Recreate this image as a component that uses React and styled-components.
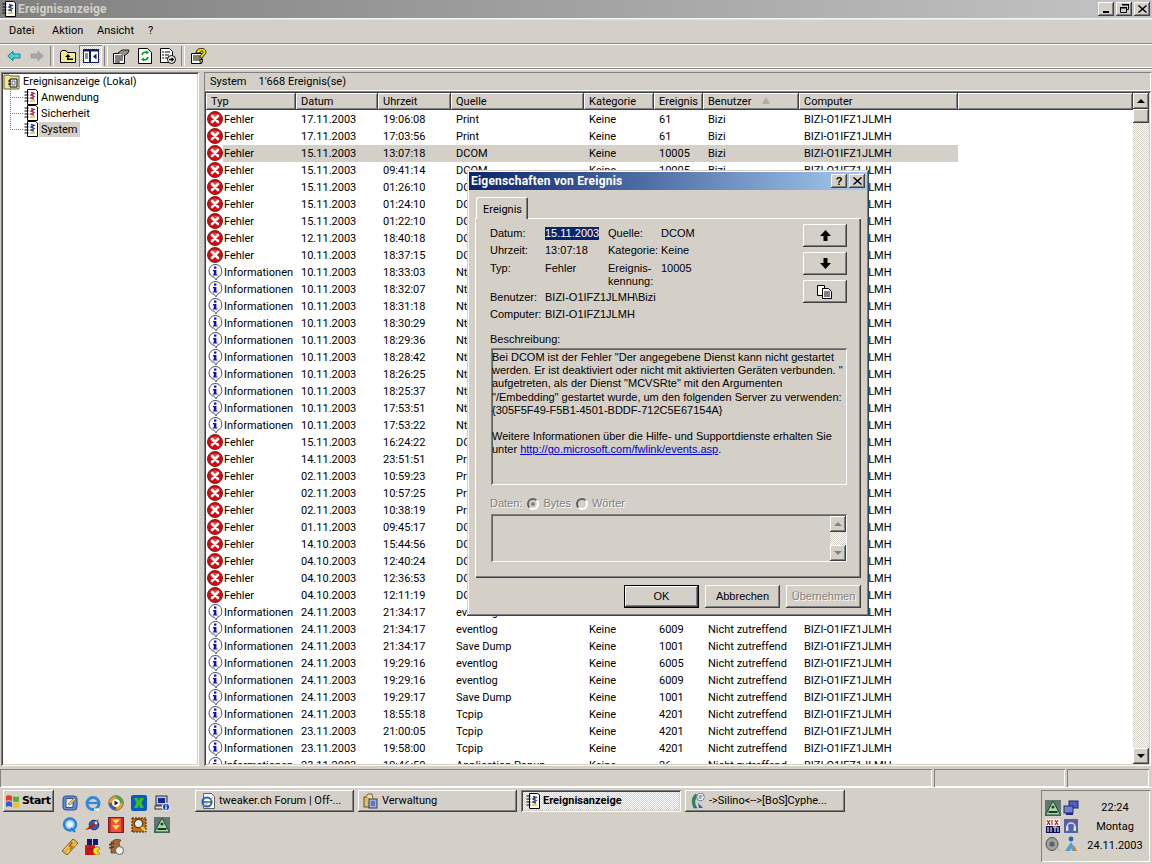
import React from 'react';
import styled, { createGlobalStyle, css } from 'styled-components';

const GREY = '#d4d0c8';

const raised = css`
  box-shadow: inset -1px -1px #404040, inset 1px 1px #fff, inset -2px -2px #808080, inset 2px 2px ${GREY};
`;
const sunken = css`
  box-shadow: inset 1px 1px #808080, inset -1px -1px #fff, inset 2px 2px #404040, inset -2px -2px ${GREY};
`;
const dither = css`
  background: repeating-conic-gradient(#fff 0 25%, ${GREY} 0 50%) 0 0 / 2px 2px;
`;

const GlobalStyle = createGlobalStyle`
  html, body { margin: 0; padding: 0; background: ${GREY}; }
  * { box-sizing: border-box; }
`;

const Desktop = styled.div`
  position: relative;
  width: 1152px;
  height: 864px;
  overflow: hidden;
  display: flex;
  flex-direction: column;
  background: ${GREY};
  color: #000;
  font: 11px/13px Roboto, "Liberation Sans", sans-serif;
`;

const TitleBar = styled.div`
  height: 19px;
  flex: none;
  display: flex;
  align-items: center;
  padding: 0 2px 1px 2px;
  gap: 2px;
  background: linear-gradient(90deg, #808080, #c4c4c4);
  border-bottom: 1px solid #f4f2ee;
`;
const TitleText = styled.div`
  flex: 1;
  font: bold 12px/14px Roboto, "Liberation Sans", sans-serif;
  letter-spacing: 0.2px;
  color: ${(p) => (p.$active ? '#fff' : GREY)};
`;
const CaptionButton = styled.div`
  width: 16px;
  height: 14px;
  background: ${GREY};
  ${raised}
  display: flex;
  align-items: center;
  justify-content: center;
`;
const MenuBar = styled.div`
  height: 25px;
  flex: none;
  display: flex;
  align-items: center;
  padding: 0 0 2px 9px;
  border-bottom: 1px solid #908c84;
  box-shadow: inset 0 1px #e8e6e0;
`;
const MenuItem = styled.span`
  width: ${(p) => p.$width}px;
`;
const Toolbar = styled.div`
  height: 24px;
  flex: none;
  display: flex;
  align-items: center;
  padding-left: 2px;
  box-shadow: inset 0 1px #fff;
  border-bottom: 1px solid #fff;
`;
const ToolButton = styled.div`
  width: 23px;
  height: 22px;
  display: flex;
  align-items: center;
  justify-content: center;
  ${(p) => p.$pressed && css`
    ${dither}
    box-shadow: inset 1px 1px #808080, inset -1px -1px #fff;
  `}
`;
const ToolSep = styled.div`
  width: 8px;
  height: 20px;
  display: flex;
  justify-content: center;
  &::after {
    content: '';
    width: 2px;
    border-left: 1px solid #808080;
    border-right: 1px solid #fff;
  }
`;
const Main = styled.div`
  flex: 1;
  min-height: 0;
  display: flex;
  padding: 3px 1px 3px 1px;
  border-top: 1px solid #808080;
  box-shadow: inset 0 1px #fff;
`;
const TreePane = styled.div`
  width: 198px;
  flex: none;
  background: #fff;
  padding: 1px 0 0 2px;
  ${sunken}
`;
const TreeRow = styled.div`
  height: 16px;
  display: flex;
  align-items: center;
  gap: ${(p) => (p.$root ? 2 : 1)}px;
`;
const TreeConnector = styled.span`
  width: 13px;
  height: 16px;
  margin-left: 7px;
  flex: none;
  background:
    repeating-linear-gradient(#808080 0 1px, transparent 1px 2px) 0 0 / 1px ${(p) => (p.$last ? '8px' : '16px')} no-repeat,
    repeating-linear-gradient(90deg, #808080 0 1px, transparent 1px 2px) 0 8px / 13px 1px no-repeat;
`;
const TreeLabel = styled.span`
  padding: 1px 2px;
  background: ${(p) => (p.$selected ? GREY : 'transparent')};
`;
const ContentPane = styled.div`
  flex: 1;
  min-width: 0;
  margin-left: 5px;
  display: flex;
  flex-direction: column;
`;
const InfoBand = styled.div`
  height: 19px;
  flex: none;
  display: flex;
  align-items: center;
  padding-left: 6px;
  gap: 12px;
  box-shadow: inset 1px 1px #808080, inset -1px -1px #fff;
`;
const ListFrame = styled.div`
  flex: 1;
  min-height: 0;
  display: flex;
  background: #fff;
  padding: 2px;
  ${sunken}
`;
const ListBody = styled.div`
  flex: 1;
  min-width: 0;
  overflow: hidden;
`;
const COLUMNS = '90px 82px 73px 133px 70px 49px 96px 159px';
const HeaderRow = styled.div`
  display: flex;
  height: 17px;
  margin-bottom: 1px;
`;
const HeaderCells = styled.div`
  display: grid;
  grid-template-columns: ${COLUMNS};
`;
const HeaderCell = styled.div`
  background: ${GREY};
  ${raised}
  padding: 2px 0 0 5px;
  white-space: nowrap;
  position: relative;
`;
const HeaderFiller = styled(HeaderCell)`
  flex: 1;
`;
const SortMark = styled.span`
  position: absolute;
  left: 59px;
  top: 4px;
  width: 0;
  height: 0;
  border-left: 4px solid transparent;
  border-right: 4px solid transparent;
  border-bottom: 7px solid #b0aca4;
`;
const Row = styled.div`
  display: grid;
  grid-template-columns: ${COLUMNS};
  width: 752px;
  height: 17px;
  align-items: center;
  white-space: nowrap;
`;
const TypeCell = styled.div`
  display: flex;
  align-items: flex-start;
  height: 17px;
  padding-left: 1px;
`;
const TypeLabel = styled.span`
  flex: 1;
  padding-left: 1px;
  line-height: 17px;
  background: ${(p) => (p.$selected ? GREY : 'transparent')};
`;
const Cell = styled.div`
  padding-left: 5px;
  height: 17px;
  line-height: 17px;
  overflow: hidden;
  background: ${(p) => (p.$selected ? GREY : 'transparent')};
`;
const ScrollBar = styled.div`
  width: 16px;
  flex: none;
  display: flex;
  flex-direction: column;
  ${dither}
`;
const ScrollButton = styled.div`
  height: ${(p) => p.$h || 16}px;
  flex: none;
  background: ${GREY};
  ${raised}
  display: flex;
  align-items: center;
  justify-content: center;
`;
const ScrollTrack = styled.div`
  flex: 1;
`;
const Arrow = styled.span`
  width: 0;
  height: 0;
  border-left: 4px solid transparent;
  border-right: 4px solid transparent;
  ${(p) => (p.$down ? 'border-top' : 'border-bottom')}: 4px solid ${(p) => (p.$disabled ? '#808080' : '#000')};
`;
const StatusBar = styled.div`
  height: 18px;
  flex: none;
  display: flex;
  gap: 2px;
  padding: 0 3px 0 0;
`;
const StatusPanel = styled.div`
  width: ${(p) => (p.$width ? `${p.$width}px` : 'auto')};
  flex: ${(p) => (p.$width ? 'none' : 1)};
  box-shadow: inset 1px 1px #808080, inset -1px -1px #fff;
`;
const Taskbar = styled.div`
  height: 77px;
  flex: none;
  display: flex;
  align-items: flex-start;
  padding: 2px 2px 2px 3px;
  border-top: 1px solid #fff;
`;
const StartButton = styled.div`
  width: 51px;
  height: 22px;
  flex: none;
  ${raised}
  display: flex;
  align-items: center;
  gap: 1px;
  padding: 0 0 1px 2px;
  font: bold 11px/14px "DejaVu Sans", sans-serif;
  letter-spacing: -0.6px;
`;
const QuickLaunch = styled.div`
  width: 141px;
  flex: none;
  padding: 2px 0 0 4px;
  display: grid;
  grid-template-columns: repeat(5, 23px);
  grid-auto-rows: 22px;
  justify-items: center;
  align-items: center;
`;
const TaskButtons = styled.div`
  display: flex;
  gap: 4px;
  flex: 1;
`;
const TaskButton = styled.div`
  width: ${(p) => p.$width}px;
  height: 22px;
  flex: none;
  display: flex;
  align-items: center;
  gap: 3px;
  padding: 0 0 1px 5px;
  white-space: nowrap;
  ${raised}
  ${(p) => p.$active && css`
    ${dither}
    ${sunken}
    font-weight: bold;
  `}
`;
const Tray = styled.div`
  width: 109px;
  height: 72px;
  flex: none;
  display: flex;
  box-shadow: inset 1px 1px #808080, inset -1px -1px #fff;
  padding: 9px 0 0 3px;
`;
const TrayIcons = styled.div`
  display: grid;
  grid-template-columns: 18px 18px;
  grid-auto-rows: 18px;
  justify-items: center;
  align-items: center;
`;
const Clock = styled.div`
  flex: 1;
  display: flex;
  flex-direction: column;
  align-items: center;
  gap: 6px;
  padding-top: 2px;
`;

/* dialog */
const Dialog = styled.div`
  position: absolute;
  left: 467px;
  top: 170px;
  width: 402px;
  height: 446px;
  background: ${GREY};
  padding: 2px;
  box-shadow: inset -1px -1px #404040, inset 1px 1px ${GREY}, inset -2px -2px #808080, inset 2px 2px #fff;
  font: 11px/13px "Liberation Sans", sans-serif;
`;
const DialogTitle = styled.div`
  height: 18px;
  display: flex;
  align-items: center;
  padding: 0 2px;
  gap: 2px;
  background: linear-gradient(90deg, #0a246a, #a6caf0);
`;
const DialogBody = styled.div`
  padding: 7px 6px 0 6px;
`;
const Tab = styled.div`
  width: 52px;
  height: 22px;
  margin: 0 0 -1px 1px;
  padding: 6px 0 0 7px;
  background: ${GREY};
  position: relative;
  z-index: 1;
  font: 11px/13px Roboto, "Liberation Sans", sans-serif;
  border-radius: 2px 2px 0 0;
  box-shadow: inset 1px 1px #fff, inset -1px 0 #404040, inset -2px 0 #808080;
`;
const TabPanel = styled.div`
  height: 360px;
  padding: 6px 14px 0 15px;
  box-shadow: inset 1px 1px #fff, inset -1px -1px #404040, inset -2px -2px #808080;
`;
const TopArea = styled.div`
  display: flex;
  justify-content: space-between;
  height: 102px;
`;
const Fields = styled.div`
  margin-top: 3px;
  display: grid;
  grid-template-columns: 55px 63px 53px auto;
  grid-template-rows: 17px 18px 29px 17px 17px;
  align-items: start;
`;
const Wide = styled.div`
  grid-column: 2 / span 3;
`;
const Highlight = styled.span`
  display: inline-block;
  background: #0a246a;
  color: #fff;
`;
const ArrowButtons = styled.div`
  display: flex;
  flex-direction: column;
  gap: 5px;
`;
const ArrowButton = styled.div`
  width: 44px;
  height: 23px;
  background: ${GREY};
  ${raised}
  display: flex;
  align-items: center;
  justify-content: center;
`;
const SectionLabel = styled.div`
  margin-top: 7px;
`;
const DescriptionBox = styled.div`
  margin: 2px 0 0 1px;
  width: 356px;
  height: 137px;
  padding: 3px 0 0 1px;
  line-height: 13.2px;
  white-space: pre;
  box-shadow: inset 1px 1px #808080, inset -1px -1px #fff, inset 2px 2px #606060;
`;
const LinkText = styled.span`
  color: #0000c8;
  text-decoration: underline;
`;
const DataRow = styled.div`
  margin-top: 12px;
  height: 13px;
  display: flex;
  align-items: center;
  color: #808080;
  text-shadow: 1px 1px #fff;
`;
const Radio = styled.span`
  width: 12px;
  height: 12px;
  margin: 0 4px 0 5px;
  border-radius: 50%;
  flex: none;
  display: flex;
  align-items: center;
  justify-content: center;
  background: ${GREY};
  border: 2px solid;
  border-color: #606060 #fff #fff #606060;
  &::after {
    content: '';
    width: 4px;
    height: 4px;
    border-radius: 50%;
    background: ${(p) => (p.$checked ? '#808080' : 'transparent')};
  }
`;
const DataBox = styled.div`
  margin: 4px 0 0 1px;
  width: 356px;
  height: 48px;
  display: flex;
  justify-content: flex-end;
  padding: 2px 1px 1px 2px;
  box-shadow: inset 1px 1px #808080, inset -1px -1px #fff, inset 2px 2px #606060;
`;
const DialogFooter = styled.div`
  margin-top: 7px;
  display: flex;
  justify-content: flex-end;
  gap: 6px;
`;
const PushButton = styled.div`
  height: 23px;
  width: 75px;
  background: ${GREY};
  display: flex;
  align-items: center;
  justify-content: center;
  ${raised}
  ${(p) => p.$default && css`
    outline: 1px solid #000;
    outline-offset: -1px;
    box-shadow: inset -2px -2px #404040, inset 2px 2px #fff, inset -3px -3px #808080;
  `}
  ${(p) => p.$disabled && css`
    color: #808080;
    text-shadow: 1px 1px #fff;
  `}
`;

/* icons */
const Svg = ({ size = 16, w, h, children }) => (
  <svg width={w || size} height={h || size} viewBox={`0 0 ${w || size} ${h || size}`} style={{ display: 'block', flex: 'none' }}>
    {children}
  </svg>
);

const ErrorIcon = () => (
  <Svg size={16}>
    <circle cx="8" cy="8" r="7.5" fill="#d20c12" stroke="#8a1a1a" />
    <path d="M3 6a5.5 5.5 0 0 1 10 0" fill="#f06a60" opacity=".6" />
    <path d="M5 5l6 6M11 5l-6 6" stroke="#fff" strokeWidth="2.6" strokeLinecap="round" />
  </Svg>
);
const InfoIcon = () => (
  <Svg size={16}>
    <path d="M8 .5a6.6 6.6 0 0 1 2.4 12.8L9 16l-1.5-2.6A6.5 6.5 0 0 1 8 .5z" fill="#fff" stroke="#505060" />
    <path d="M2 10a7 7 0 0 0 5.5 3.4L9 15.5" fill="none" stroke="#a0a0a8" />
    <rect x="7" y="2.5" width="2.4" height="2.2" fill="#1010c0" />
    <path d="M6 6h3.4v4.4h1v1.2H5.8v-1.2h1V7.2H6z" fill="#1010c0" />
  </Svg>
);
const LogIcon = ({ tone = '#a03060' }) => (
  <Svg w={14} h={16}>
    <path d="M3.5.5h8l2 1.5v13.5h-10z" fill="#fff" stroke="#000" />
    <path d="M.5 3h4M.5 6h4M.5 9h4M.5 12h4" stroke="#000" />
    <path d="M7 3.5l3 1-3 1.5 3 1.5-3 1.5 3 1" fill="none" stroke={tone} strokeWidth="1.4" />
    <path d="M6 12h5" stroke="#c8b000" strokeWidth="1.2" />
  </Svg>
);
const RootIcon = () => (
  <Svg size={18}>
    <path d="M1 3h5l1 1h9v13H1z" fill="#f0e890" stroke="#606040" />
    <path d="M9 7h5v8H7V7z" fill="#fff" stroke="#000" />
    <path d="M9 9h3v4H9z" fill="none" stroke="#6060a0" />
    <path d="M5 9h3M5 12h3" stroke="#000" />
  </Svg>
);
const BackIcon = () => (
  <Svg w={14} h={12}>
    <path d="M.8 6L6 1.2V4h7v4H6v2.8z" fill="#40d8e0" stroke="#106070" strokeWidth=".8" />
  </Svg>
);
const ForwardIcon = () => (
  <Svg w={14} h={12}>
    <path d="M13.2 6L8 1.2V4H1v4h7v2.8z" fill="#a8a8a8" stroke="#989898" strokeWidth=".8" />
  </Svg>
);
const UpFolderIcon = () => (
  <Svg w={16} h={14}>
    <path d="M.5 3.5l1.5-2h4l1.5 2h8v10H.5z" fill="#f4ec90" stroke="#000" />
    <path d="M8 5L5 8h2v3h6v-1.4H8.6V8h2z" fill="#000" />
  </Svg>
);
const PaneIcon = () => (
  <Svg w={16} h={14}>
    <rect x=".5" y=".5" width="15" height="13" fill="#fff" stroke="#102060" />
    <rect x=".5" y=".5" width="15" height="2" fill="#102060" />
    <rect x="6" y="1" width="2" height="13" fill="#102060" />
    <path d="M2 5h3M2 7h3M2 9h3" stroke="#102060" />
    <path d="M13.5 4.5v6l-3.5-3z" fill="#102060" />
  </Svg>
);
const PropsIcon = () => (
  <Svg w={17} h={16}>
    <path d="M.5 5.5h11v10H.5z" fill="#fff" stroke="#000" />
    <path d="M2 8h8M2 10h8M2 12h8M2 14h5" stroke="#000" />
    <path d="M5 5l4-3h7l-1 3-4 3" fill="#909090" stroke="#202020" />
  </Svg>
);
const RefreshIcon = () => (
  <Svg w={14} h={16}>
    <path d="M.5.5h9l4 4v11H.5z" fill="#fff" stroke="#000" />
    <path d="M4 7a3.4 3.4 0 0 1 5-2.4M10 9a3.4 3.4 0 0 1-5 2.4" fill="none" stroke="#10a020" strokeWidth="1.8" />
    <path d="M8 2.5l3 2-3 2zM6 9.5l-3 2 3 2z" fill="#10a020" />
  </Svg>
);
const ExportIcon = () => (
  <Svg w={16} h={16}>
    <path d="M.5.5h9l3 3v11H.5z" fill="#fff" stroke="#000" />
    <path d="M2 4h2M5 4h5M2 7h2M5 7h4M2 10h2M5 10h3" stroke="#000" />
    <circle cx="11.5" cy="11.5" r="4" fill="#fff" stroke="#000" />
    <path d="M9 10.7h2.5V9l2.7 2.5L11.5 14v-1.7H9z" fill="#000" />
  </Svg>
);
const HelpIcon = () => (
  <Svg w={16} h={16}>
    <path d="M.5 5.5h10v10H.5z" fill="#fff" stroke="#000" />
    <path d="M2 8h7M2 10h7M2 12h7" stroke="#000" />
    <path d="M5 5c0-6 10-6 10-1 0 3-3 3-3.5 6h-2.5c0-4 3-4 3-6 0-1.5-3-1.5-3 1z" fill="#f0d800" stroke="#000" strokeWidth=".8" />
    <rect x="9" y="11.5" width="2.6" height="2.6" fill="#f0d800" stroke="#000" strokeWidth=".8" />
  </Svg>
);
const CopyIcon = () => (
  <Svg w={16} h={14}>
    <path d="M.5.5h7v3h-2v7h-5z" fill="#fff" stroke="#000" />
    <path d="M5.5 3.5h6l3 3v7h-9z" fill="#fff" stroke="#000" />
    <path d="M7 7h6M7 9h6M7 11h6" stroke="#000" />
  </Svg>
);
const CloseGlyph = () => (
  <Svg w={9} h={8}><path d="M1 0l3.5 3L8 0l1 1-3.5 3L9 7 8 8 4.5 5 1 8 0 7l3.5-3L0 1z" /></Svg>
);
const WinFlag = () => (
  <Svg size={16}>
    <path d="M1 3c2-1 3-1 6 0v5c-3-1-4-1-6 0z" fill="#e04020" />
    <path d="M8 3.3c2 1 4 1 6 0v5c-2 1-4 1-6 0z" fill="#50b030" />
    <path d="M1 9c2-1 3-1 6 0v5c-3-1-4-1-6 0z" fill="#3060d0" />
    <path d="M8 9.3c2 1 4 1 6 0v5c-2 1-4 1-6 0z" fill="#f0c020" />
  </Svg>
);
const IeDocIcon = () => (
  <Svg size={16}>
    <path d="M3.5.5h8l3 3v12h-11z" fill="#fff" stroke="#606060" />
    <circle cx="7" cy="9" r="4.6" fill="none" stroke="#2060c0" strokeWidth="2" />
    <path d="M2.5 9h9" stroke="#2060c0" strokeWidth="1.6" />
    <path d="M1 13c3 0 9-4 12-9" fill="none" stroke="#e0b020" />
  </Svg>
);
const ToolsIcon = () => (
  <Svg size={16}>
    <rect x="1" y="4" width="7" height="10" fill="#d8c070" stroke="#705010" />
    <rect x="6" y="6" width="8" height="9" fill="#a0b0e0" stroke="#303870" />
    <path d="M3 4l2-3h4l1 5" fill="#e8e0b0" stroke="#806020" />
    <path d="M9 8v5M11 8v5" stroke="#303870" />
  </Svg>
);
const ChatIcon = () => (
  <Svg size={16}>
    <path d="M6 1c-4 2-5 8-2 14h3c-3-4-3-8 0-11z" fill="#209050" stroke="#105030" strokeWidth=".5" />
    <path d="M8 10l5 5H9z" fill="#2060b0" />
    <circle cx="10.5" cy="4" r="3.8" fill="#fff" stroke="#6080a0" />
    <path d="M8.5 3h4M8.5 5h3" stroke="#305070" />
  </Svg>
);

const Q = {
  mail: (
    <Svg size={16}>
      <rect x="1" y="1" width="14" height="14" rx="3" fill="#5d8fd0" stroke="#2a4c90" />
      <path d="M4 3.5h7v9H4z" fill="#e8eef8" stroke="#305090" />
      <path d="M6 9l6-6 2 1-6 6z" fill="#f0c050" stroke="#805020" strokeWidth=".5" />
    </Svg>
  ),
  ie: (
    <Svg size={16}>
      <circle cx="8" cy="8.5" r="6" fill="none" stroke="#3088dc" strokeWidth="3" />
      <path d="M3 8h11" stroke="#3088dc" strokeWidth="2.2" />
      <path d="M9 14.5h5" stroke="#fff" strokeWidth="2" />
    </Svg>
  ),
  wmp: (
    <Svg size={16}>
      <circle cx="8" cy="8" r="7.3" fill="#e8a030" stroke="#807050" />
      <path d="M8 1a7 7 0 0 1 7 7h-3a4 4 0 0 0-4-4z" fill="#50a050" />
      <path d="M1 8a7 7 0 0 0 7 7v-3a4 4 0 0 1-4-4z" fill="#3060c0" />
      <circle cx="8" cy="8" r="3.8" fill="#fff" />
      <path d="M6.5 5.5v5l4-2.5z" fill="#202020" />
    </Svg>
  ),
  kazaa: (
    <Svg size={16}>
      <rect width="16" height="16" rx="2" fill="#0858c8" />
      <path d="M3 3h4l1 3 1-3h4l-2.5 5L13 13H9L8 10l-1 3H3l2.5-5z" fill="#38c020" />
    </Svg>
  ),
  monitor: (
    <Svg size={16}>
      <rect x="2" y="1" width="11" height="9" fill="#c8c8c8" stroke="#303030" />
      <rect x="4" y="3" width="7" height="5" fill="#1028a0" />
      <rect x="1" y="11" width="10" height="3" fill="#e0e0e0" stroke="#303030" />
      <circle cx="12" cy="12" r="3.8" fill="#1840d0" stroke="#fff" />
      <path d="M12 9.8v1M12 11.5v3" stroke="#fff" strokeWidth="1.4" />
    </Svg>
  ),
  quicktime: (
    <Svg size={16}>
      <circle cx="8" cy="7.5" r="6" fill="#a0d0f0" stroke="#2880d0" strokeWidth="2.4" />
      <circle cx="8" cy="7.5" r="2.8" fill="#e8f4ff" />
      <path d="M9 11l4 4" stroke="#2880d0" strokeWidth="2.4" />
    </Svg>
  ),
  comet: (
    <Svg size={16}>
      <circle cx="9" cy="8" r="4.8" fill="#2a62b8" stroke="#1a3070" />
      <path d="M0 13L14 2l-3 6-6 4z" fill="#b02020" />
      <circle cx="11" cy="6" r="1.4" fill="#e0e8ff" />
    </Svg>
  ),
  getright: (
    <Svg size={16}>
      <rect x=".5" y=".5" width="15" height="15" fill="#d02828" stroke="#702020" />
      <rect x="3" y="1" width="10" height="14" fill="#f05040" />
      <path d="M4 2.5h8L8 7zM4 8h8l-4 5z" fill="#f8e040" />
    </Svg>
  ),
  magnifier: (
    <Svg size={16}>
      <rect x="1" y="1" width="14" height="14" fill="#c87018" stroke="#302010" strokeDasharray="2 1" />
      <circle cx="7.5" cy="6.5" r="4.2" fill="#e0f0f8" stroke="#604010" strokeWidth="1.4" />
      <path d="M10.5 10l4 4" stroke="#f0d050" strokeWidth="2.4" />
    </Svg>
  ),
  pyramid: (
    <Svg size={16}>
      <rect width="16" height="16" fill="#607870" />
      <path d="M8 1l7.5 14H.5z" fill="#a8d8a8" stroke="#204830" />
      <path d="M3.5 11h9v2h-9z" fill="#203828" />
      <circle cx="8" cy="7" r="1.6" fill="#204830" />
    </Svg>
  ),
  winamp: (
    <Svg size={16}>
      <path d="M11 0l5 4-11 12-5-4z" fill="#e8b040" stroke="#806020" />
      <path d="M2 11l10-9M5 14l9-9" stroke="#fff0b0" />
      <path d="M9 3L6 8h3l-2 5 5-6H9l2-4z" fill="#b07010" />
    </Svg>
  ),
  pacman: (
    <Svg size={16}>
      <rect x="2" width="5" height="6" fill="#101870" />
      <rect x="8" width="5" height="6" fill="#101870" />
      <rect y="6" width="10" height="10" fill="#d81818" />
      <path d="M1 10h8M5 6v4M3 10v6M7 10v6" stroke="#801010" strokeWidth=".6" />
      <path d="M12 8a4 4 0 1 0 3 6.5L12 12l3-2.5A4 4 0 0 0 12 8z" fill="#f8e020" stroke="#403000" strokeWidth=".5" />
    </Svg>
  ),
  donkey: (
    <Svg size={16}>
      <path d="M3 3l5-3 5 1-2 3 1 4-1 6H3z" fill="#a06838" stroke="#402810" strokeWidth=".6" />
      <path d="M1 6l5-2M1 9l5-1" stroke="#603818" strokeWidth="1.4" />
      <circle cx="11.5" cy="11.5" r="4" fill="#f0f0e8" stroke="#606060" />
    </Svg>
  ),
};

const T = {
  pyramid: Q.pyramid,
  network: (
    <Svg size={16}>
      <rect x="6" y="1" width="9" height="7" fill="#5060c0" stroke="#202870" />
      <rect x="1" y="6" width="9" height="7" fill="#7080d8" stroke="#202870" />
      <path d="M3 14h7" stroke="#202870" strokeWidth="2" />
    </Svg>
  ),
  lite: (
    <Svg size={16}>
      <rect x="1" y="1" width="14" height="7" fill="#fff" />
      <path d="M2 2l3 5M5 2L2 7M7 2v5M10 2l3 5M13 2l-3 5" stroke="#d01010" strokeWidth="1.2" />
      <rect x="1" y="8" width="14" height="7" fill="#101050" />
      <path d="M3 9v5M6 9v5M8 9h4M10 9v5M13 9v5" stroke="#fff" />
    </Svg>
  ),
  phones: (
    <Svg size={16}>
      <rect x="1" y="1" width="14" height="14" fill="#5860a8" />
      <path d="M4 9a4 4 0 0 1 8 0" fill="none" stroke="#e0e0f0" strokeWidth="1.4" />
      <rect x="3" y="8.5" width="2.4" height="4.5" fill="#e0e0f0" />
      <rect x="10.6" y="8.5" width="2.4" height="4.5" fill="#e0e0f0" />
    </Svg>
  ),
  speaker: (
    <Svg size={16}>
      <ellipse cx="7" cy="8" rx="6" ry="6.5" fill="#a0a0a0" stroke="#505050" />
      <circle cx="7" cy="8" r="2.6" fill="#606060" />
      <path d="M12 12l3 3" stroke="#c0c0c0" strokeWidth="2" />
    </Svg>
  ),
  person: (
    <Svg size={16}>
      <circle cx="8" cy="3" r="2.4" fill="#2060c0" />
      <path d="M8 6l-6 9h5l1-3 1 3h5z" fill="#50a0d0" />
      <path d="M11 9l3 6h-3z" fill="#e08020" />
    </Svg>
  ),
};

/* data */
const PC = 'BIZI-O1IFZ1JLMH';
const NA = 'Nicht zutreffend';
const err = (date, time, source, id = '10005') => ['e', date, time, source, 'Keine', id, 'Bizi', PC];
const inf = (date, time, source, id = '4359', user = NA) => ['i', date, time, source, 'Keine', id, user, PC];
const sp = (time) => inf('10.11.2003', time, 'NtServicePack', '4359', 'Bizi');

const rows = [
  err('17.11.2003', '19:06:08', 'Print', '61'),
  err('17.11.2003', '17:03:56', 'Print', '61'),
  err('15.11.2003', '13:07:18', 'DCOM'),
  err('15.11.2003', '09:41:14', 'DCOM'),
  err('15.11.2003', '01:26:10', 'DCOM'),
  err('15.11.2003', '01:24:10', 'DCOM'),
  err('15.11.2003', '01:22:10', 'DCOM'),
  err('12.11.2003', '18:40:18', 'DCOM'),
  err('10.11.2003', '18:37:15', 'DCOM'),
  sp('18:33:03'),
  sp('18:32:07'),
  sp('18:31:18'),
  sp('18:30:29'),
  sp('18:29:36'),
  sp('18:28:42'),
  sp('18:26:25'),
  sp('18:25:37'),
  sp('17:53:51'),
  sp('17:53:22'),
  err('15.11.2003', '16:24:22', 'DCOM'),
  err('14.11.2003', '23:51:51', 'Print', '61'),
  err('02.11.2003', '10:59:23', 'Print', '61'),
  err('02.11.2003', '10:57:25', 'Print', '61'),
  err('02.11.2003', '10:38:19', 'Print', '61'),
  err('01.11.2003', '09:45:17', 'DCOM'),
  err('14.10.2003', '15:44:56', 'DCOM'),
  err('04.10.2003', '12:40:24', 'DCOM'),
  err('04.10.2003', '12:36:53', 'DCOM'),
  err('04.10.2003', '12:11:19', 'DCOM'),
  inf('24.11.2003', '21:34:17', 'eventlog', '6005'),
  inf('24.11.2003', '21:34:17', 'eventlog', '6009'),
  inf('24.11.2003', '21:34:17', 'Save Dump', '1001'),
  inf('24.11.2003', '19:29:16', 'eventlog', '6005'),
  inf('24.11.2003', '19:29:16', 'eventlog', '6009'),
  inf('24.11.2003', '19:29:17', 'Save Dump', '1001'),
  inf('24.11.2003', '18:55:18', 'Tcpip', '4201'),
  inf('23.11.2003', '21:00:05', 'Tcpip', '4201'),
  inf('23.11.2003', '19:58:00', 'Tcpip', '4201'),
  inf('23.11.2003', '19:46:50', 'Application Popup', '26'),
];

const headers = ['Typ', 'Datum', 'Uhrzeit', 'Quelle', 'Kategorie', 'Ereignis', 'Benutzer', 'Computer'];

function EventRow({ row, selected }) {
  const [type, ...rest] = row;
  return (
    <Row>
      <TypeCell>
        {type === 'e' ? <ErrorIcon /> : <InfoIcon />}
        <TypeLabel $selected={selected}>{type === 'e' ? 'Fehler' : 'Informationen'}</TypeLabel>
      </TypeCell>
      {rest.map((value, i) => (
        <Cell key={i} $selected={selected}>{value}</Cell>
      ))}
    </Row>
  );
}

function EventDialog() {
  return (
    <Dialog>
      <DialogTitle>
        <TitleText $active>Eigenschaften von Ereignis</TitleText>
        <CaptionButton>
          <b>?</b>
        </CaptionButton>
        <CaptionButton>
          <CloseGlyph />
        </CaptionButton>
      </DialogTitle>
      <DialogBody>
        <Tab>Ereignis</Tab>
        <TabPanel>
          <TopArea>
            <Fields>
              <div>Datum:</div>
              <div><Highlight>15.11.2003</Highlight></div>
              <div>Quelle:</div>
              <div>DCOM</div>
              <div>Uhrzeit:</div>
              <div>13:07:18</div>
              <div>Kategorie:</div>
              <div>Keine</div>
              <div>Typ:</div>
              <div>Fehler</div>
              <div>Ereignis-<br />kennung:</div>
              <div>10005</div>
              <div>Benutzer:</div>
              <Wide>BIZI-O1IFZ1JLMH\Bizi</Wide>
              <div>Computer:</div>
              <Wide>BIZI-O1IFZ1JLMH</Wide>
            </Fields>
            <ArrowButtons>
              <ArrowButton>
                <Svg w={11} h={11}><path d="M5.5 0L11 6H7.5v5h-4V6H0z" /></Svg>
              </ArrowButton>
              <ArrowButton>
                <Svg w={11} h={11}><path d="M5.5 11L11 5H7.5V0h-4v5H0z" /></Svg>
              </ArrowButton>
              <ArrowButton><CopyIcon /></ArrowButton>
            </ArrowButtons>
          </TopArea>
          <SectionLabel>Beschreibung:</SectionLabel>
          <DescriptionBox>
            {'Bei DCOM ist der Fehler "Der angegebene Dienst kann nicht gestartet\nwerden. Er ist deaktiviert oder nicht mit aktivierten Geräten verbunden. "\naufgetreten, als der Dienst "MCVSRte" mit den Argumenten\n"/Embedding" gestartet wurde, um den folgenden Server zu verwenden:\n{305F5F49-F5B1-4501-BDDF-712C5E67154A}\n\nWeitere Informationen über die Hilfe- und Supportdienste erhalten Sie\nunter '}
            <LinkText>http://go.microsoft.com/fwlink/events.asp</LinkText>.
          </DescriptionBox>
          <DataRow>
            Daten:<Radio $checked />Bytes<Radio />Wörter
          </DataRow>
          <DataBox>
            <ScrollBar>
              <ScrollButton><Arrow $disabled /></ScrollButton>
              <ScrollTrack />
              <ScrollButton><Arrow $down $disabled /></ScrollButton>
            </ScrollBar>
          </DataBox>
        </TabPanel>
        <DialogFooter>
          <PushButton $default>OK</PushButton>
          <PushButton>Abbrechen</PushButton>
          <PushButton $disabled>Übernehmen</PushButton>
        </DialogFooter>
      </DialogBody>
    </Dialog>
  );
}

export default function App() {
  return (
    <>
      <GlobalStyle />
      <Desktop>
        <TitleBar>
          <LogIcon tone="#304080" />
          <TitleText>Ereignisanzeige</TitleText>
          <CaptionButton>
            <Svg w={8} h={8}><rect x="1" y="6" width="6" height="2" /></Svg>
          </CaptionButton>
          <CaptionButton>
            <Svg w={9} h={9}><path d="M2.5.5h6v5h-2M.5 3.5h6v5h-6z" fill="none" stroke="#000" /><path d="M2 0h7v1.5H2zM0 3h7v1.5H0z" /></Svg>
          </CaptionButton>
          <CaptionButton>
            <CloseGlyph />
          </CaptionButton>
        </TitleBar>
        <MenuBar>
          <MenuItem $width={43}>Datei</MenuItem>
          <MenuItem $width={45}>Aktion</MenuItem>
          <MenuItem $width={51}>Ansicht</MenuItem>
          <MenuItem $width={10}>?</MenuItem>
        </MenuBar>
        <Toolbar>
          <ToolButton><BackIcon /></ToolButton>
          <ToolButton><ForwardIcon /></ToolButton>
          <ToolSep />
          <ToolButton><UpFolderIcon /></ToolButton>
          <ToolButton $pressed><PaneIcon /></ToolButton>
          <ToolSep />
          <ToolButton><PropsIcon /></ToolButton>
          <ToolButton><RefreshIcon /></ToolButton>
          <ToolButton><ExportIcon /></ToolButton>
          <ToolSep />
          <ToolButton><HelpIcon /></ToolButton>
        </Toolbar>
        <Main>
          <TreePane>
            <TreeRow $root>
              <RootIcon />
              <span>Ereignisanzeige (Lokal)</span>
            </TreeRow>
            <TreeRow>
              <TreeConnector />
              <LogIcon />
              <TreeLabel>Anwendung</TreeLabel>
            </TreeRow>
            <TreeRow>
              <TreeConnector />
              <LogIcon />
              <TreeLabel>Sicherheit</TreeLabel>
            </TreeRow>
            <TreeRow>
              <TreeConnector $last />
              <LogIcon tone="#304080" />
              <TreeLabel $selected>System</TreeLabel>
            </TreeRow>
          </TreePane>
          <ContentPane>
            <InfoBand>
              <span>System</span>
              <span>1'668 Ereignis(se)</span>
            </InfoBand>
            <ListFrame>
              <ListBody>
                <HeaderRow>
                  <HeaderCells>
                    {headers.map((h) => (
                      <HeaderCell key={h}>
                        {h}
                        {h === 'Benutzer' && <SortMark />}
                      </HeaderCell>
                    ))}
                  </HeaderCells>
                  <HeaderFiller />
                </HeaderRow>
                {rows.map((row, i) => (
                  <EventRow key={i} row={row} selected={i === 2} />
                ))}
              </ListBody>
              <ScrollBar>
                <ScrollButton><Arrow /></ScrollButton>
                <ScrollButton $h={14} />
                <ScrollTrack />
                <ScrollButton><Arrow $down /></ScrollButton>
              </ScrollBar>
            </ListFrame>
          </ContentPane>
        </Main>
        <StatusBar>
          <StatusPanel />
          <StatusPanel $width={131} />
          <StatusPanel $width={82} />
        </StatusBar>
        <Taskbar>
          <StartButton><WinFlag />Start</StartButton>
          <QuickLaunch>
            {Object.entries(Q).map(([name, icon]) => <span key={name}>{icon}</span>)}
          </QuickLaunch>
          <TaskButtons>
            <TaskButton $width={159}><IeDocIcon />tweaker.ch Forum | Off-...</TaskButton>
            <TaskButton $width={159}><ToolsIcon />Verwaltung</TaskButton>
            <TaskButton $active $width={160}><LogIcon tone="#304080" />Ereignisanzeige</TaskButton>
            <TaskButton $width={160}><ChatIcon />-&gt;Silino&lt;--&gt;[BoS]Cyphe...</TaskButton>
          </TaskButtons>
          <Tray>
            <TrayIcons>
              {Object.entries(T).map(([name, icon]) => <span key={name}>{icon}</span>)}
            </TrayIcons>
            <Clock>
              <span>22:24</span>
              <span>Montag</span>
              <span>24.11.2003</span>
            </Clock>
          </Tray>
        </Taskbar>
        <EventDialog />
      </Desktop>
    </>
  );
}
